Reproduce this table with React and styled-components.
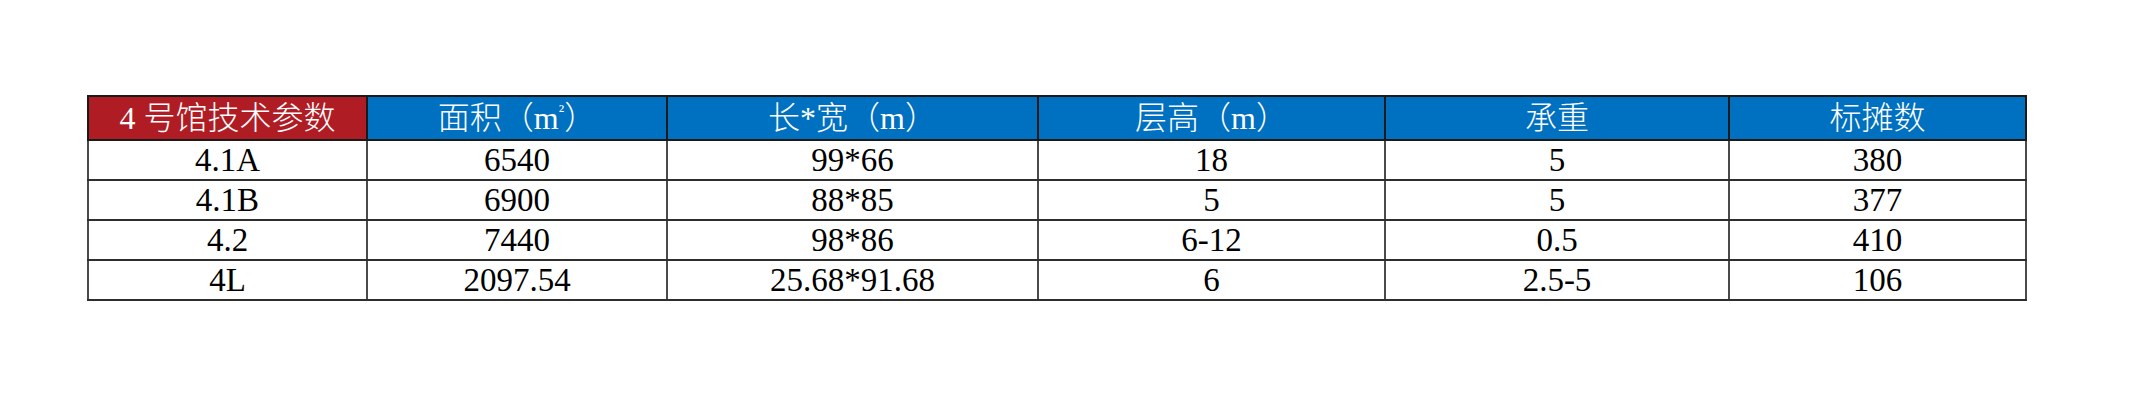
import React from "react";
import styled, { createGlobalStyle } from "styled-components";

const GlobalStyle = createGlobalStyle`
  html, body {
    margin: 0;
    padding: 0;
    background: #ffffff;
  }
  body {
    font-family: "Liberation Serif", "Noto Sans CJK SC", serif;
  }
`;

const Page = styled.div`
  width: 2137px;
  height: 400px;
  box-sizing: border-box;
  padding: 95px 0 0 87px;
  background: #ffffff;
`;

const Table = styled.table`
  border-collapse: collapse;
  table-layout: fixed;
  width: 1938px;
  border: 2px solid #2a2a2a;
`;

const HeadCell = styled.th`
  height: 42px;
  padding: 0;
  background: ${(p) => (p.$accent ? "#B01C24" : "#0070C0")};
  color: #ffffff;
  font-family: "Liberation Serif", "Noto Sans CJK SC", serif;
  font-size: 32px;
  font-weight: 300;
  line-height: 1;
  text-align: center;
  vertical-align: middle;
  border: 2px solid #1a1a1a;
  white-space: nowrap;
`;

const Cell = styled.td`
  height: 38px;
  padding: 0;
  color: #000000;
  font-family: "Liberation Serif", serif;
  font-size: 33px;
  line-height: 1;
  text-align: center;
  vertical-align: middle;
  border-left: 2px solid #4a4a4a;
  border-right: 2px solid #4a4a4a;
  border-top: 2px solid #2e2e2e;
  border-bottom: 2px solid #2e2e2e;
  white-space: nowrap;
`;

const Sup = styled.span`
  font-size: 18px;
  vertical-align: 12px;
`;

const widths = [279, 300, 371, 347, 344, 297];

const rows = [
  ["4.1A", "6540", "99*66", "18", "5", "380"],
  ["4.1B", "6900", "88*85", "5", "5", "377"],
  ["4.2", "7440", "98*86", "6-12", "0.5", "410"],
  ["4L", "2097.54", "25.68*91.68", "6", "2.5-5", "106"],
];

export default function App() {
  return (
    <>
      <GlobalStyle />
      <Page>
        <Table>
          <colgroup>
            {widths.map((w, i) => (
              <col key={i} style={{ width: `${w}px` }} />
            ))}
          </colgroup>
          <thead>
            <tr>
              <HeadCell $accent>4 号馆技术参数</HeadCell>
              <HeadCell>
                面积（m<Sup>²</Sup>）
              </HeadCell>
              <HeadCell>长*宽（m）</HeadCell>
              <HeadCell>层高（m）</HeadCell>
              <HeadCell>承重</HeadCell>
              <HeadCell>标摊数</HeadCell>
            </tr>
          </thead>
          <tbody>
            {rows.map((r, i) => (
              <tr key={i}>
                {r.map((c, j) => (
                  <Cell key={j}>{c}</Cell>
                ))}
              </tr>
            ))}
          </tbody>
        </Table>
      </Page>
    </>
  );
}
